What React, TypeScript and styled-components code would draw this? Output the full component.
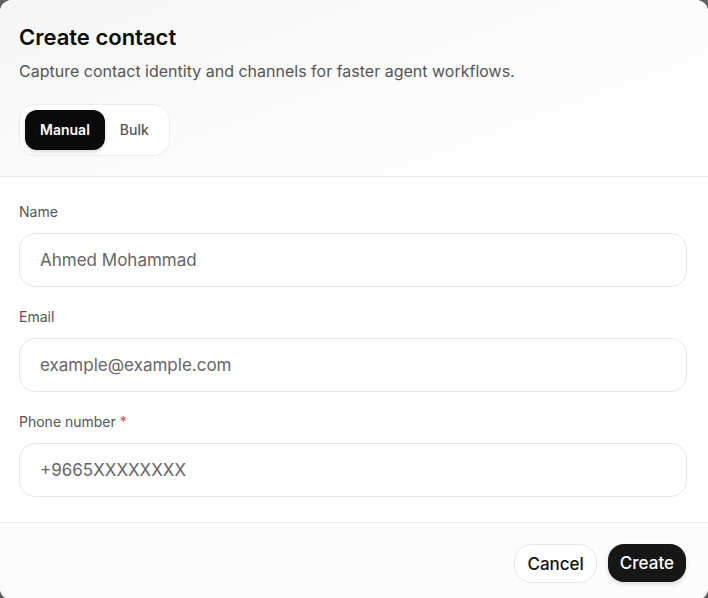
import React, { useState } from 'react';
import styled, { createGlobalStyle } from 'styled-components';

const GlobalStyle = createGlobalStyle`
  html, body {
    margin: 0;
    padding: 0;
    height: 100%;
    background: #5f5f5f;
    overflow: hidden;
  }
  body {
    font-family: Inter, "Noto Sans", "Liberation Sans", sans-serif;
    -webkit-font-smoothing: antialiased;
  }
  * { box-sizing: border-box; }
`;

type Mode = 'manual' | 'bulk';

const fields = [
  { id: 'name', label: 'Name', placeholder: 'Ahmed Mohammad' },
  { id: 'email', label: 'Email', placeholder: 'example@example.com' },
  { id: 'phone', label: 'Phone number', placeholder: '+9665XXXXXXXX', required: true },
];

function App() {
  const [mode, setMode] = useState<Mode>('manual');

  return (
    <>
      <GlobalStyle />
      <StyledDialog>
        <StyledHeader>
          <StyledTitle>Create contact</StyledTitle>
          <StyledSubtitle>Capture contact identity and channels for faster agent workflows.</StyledSubtitle>
          <StyledToggle>
            <StyledToggleButton $active={mode === 'manual'} onClick={() => setMode('manual')}>
              Manual
            </StyledToggleButton>
            <StyledToggleButton $active={mode === 'bulk'} onClick={() => setMode('bulk')}>
              Bulk
            </StyledToggleButton>
          </StyledToggle>
        </StyledHeader>

        <StyledBody>
          {fields.map((f) => (
            <StyledField key={f.id}>
              <StyledLabel htmlFor={f.id}>
                {f.label}
                {f.required && <StyledRequired> *</StyledRequired>}
              </StyledLabel>
              <StyledInput id={f.id} placeholder={f.placeholder} />
            </StyledField>
          ))}
        </StyledBody>

        <StyledFooter>
          <StyledCancel type="button">Cancel</StyledCancel>
          <StyledCreate type="button">Create</StyledCreate>
        </StyledFooter>
      </StyledDialog>
    </>
  );
}

const StyledDialog = styled.div`
  width: 708px;
  height: 600px;
  border-radius: 12px;
  overflow: hidden;
  background: #fff;
  display: flex;
  flex-direction: column;
`;

const StyledHeader = styled.header`
  padding: 23px 19px 20px;
  border-bottom: 1px solid #ececec;
  background: linear-gradient(160deg, #f6f6f6 0%, #fbfbfb 45%, #ffffff 100%);
`;

const StyledTitle = styled.h2`
  margin: 0;
  font-size: 22px;
  line-height: 28px;
  font-weight: 600;
  color: #0b0b0b;
`;

const StyledSubtitle = styled.p`
  margin: 8px 0 0;
  font-size: 16px;
  line-height: 24px;
  color: #555;
`;

const StyledToggle = styled.div`
  display: inline-flex;
  align-items: center;
  margin-top: 21px;
  padding: 5px;
  width: 151px;
  height: 52px;
  border: 1px solid #ececec;
  border-radius: 16px;
  background: #fff;
`;

const StyledToggleButton = styled.button<{ $active: boolean }>`
  height: 40px;
  padding: 0 15px;
  border: none;
  border-radius: 12px;
  font-family: inherit;
  font-size: 14px;
  line-height: 38px;
  font-weight: ${({ $active }) => ($active ? 600 : 500)};
  color: ${({ $active }) => ($active ? '#fff' : '#555')};
  background: ${({ $active }) => ($active ? '#0a0a0a' : 'transparent')};
  box-shadow: ${({ $active }) => ($active ? '0 2px 4px rgba(0,0,0,0.15)' : 'none')};
  cursor: pointer;
`;

const StyledBody = styled.div`
  display: flex;
  flex-direction: column;
  gap: 20px;
  padding: 25px 21px 25px 19px;
  border-bottom: 1px solid #ececec;
`;

const StyledField = styled.div`
  display: flex;
  flex-direction: column;
  gap: 11px;
`;

const StyledLabel = styled.label`
  font-size: 14px;
  line-height: 20px;
  color: #555;
`;

const StyledRequired = styled.span`
  color: #e5484d;
`;

const StyledInput = styled.input`
  height: 54px;
  width: 100%;
  padding: 0 20px;
  border: 1px solid #e6e6e6;
  border-radius: 16px;
  background: #fff;
  font-family: inherit;
  font-size: 17px;
  color: #111;
  outline: none;

  &::placeholder {
    color: #666;
  }
`;

const StyledFooter = styled.footer`
  flex: 1;
  display: flex;
  justify-content: flex-end;
  align-items: flex-start;
  gap: 11px;
  padding: 21px 22px 0;
  background: #fcfcfc;
`;

const StyledCancel = styled.button`
  height: 39px;
  padding: 0 12px;
  border: 1px solid #e6e6e6;
  border-radius: 18px;
  background: #fff;
  font-family: inherit;
  font-size: 17px;
  font-weight: 500;
  color: #111;
  cursor: pointer;
`;

const StyledCreate = styled.button`
  height: 38px;
  padding: 0 12px;
  border: none;
  border-radius: 16px;
  background: #161616;
  font-family: inherit;
  font-size: 17px;
  font-weight: 500;
  color: #fff;
  box-shadow: 0 2px 4px rgba(0, 0, 0, 0.15);
  cursor: pointer;
`;

export default App;
